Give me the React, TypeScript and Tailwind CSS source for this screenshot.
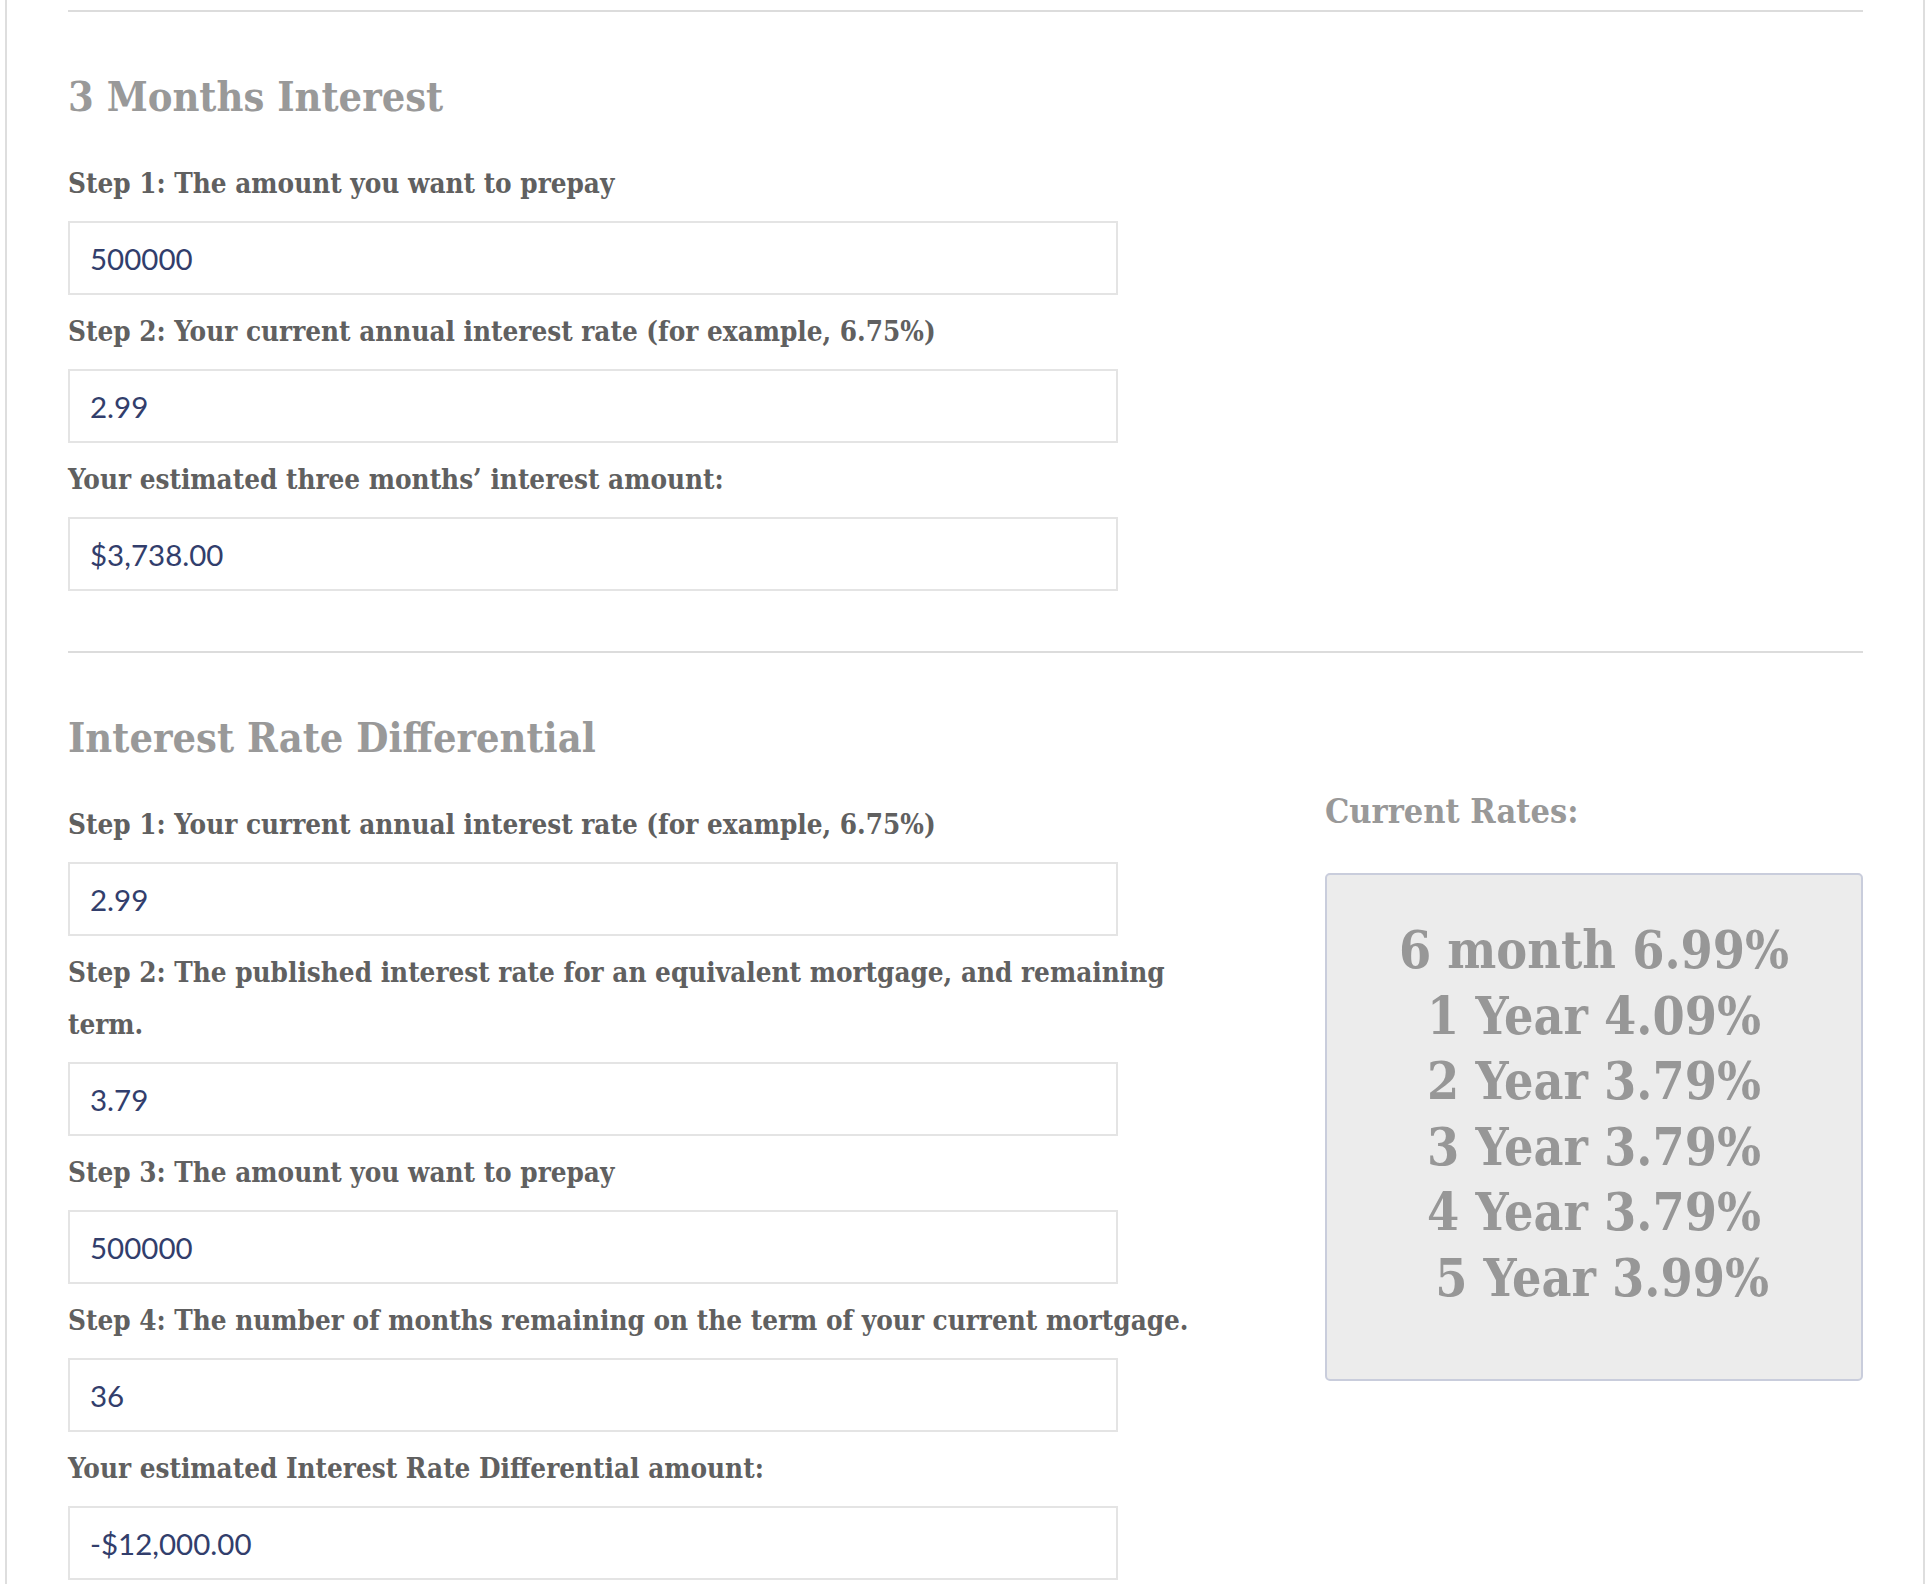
import React from 'react';

const slab = "font-['DejaVu_Serif_Condensed','DejaVu_Serif',serif] font-bold";

type FieldProps = { label: string; value: string };

const Field = ({ label, value }: FieldProps) => (
  <div>
    <label className={`block py-[11px] text-[27.6px] leading-[52px] text-[#606060] ${slab}`}>{label}</label>
    <input
      readOnly
      defaultValue={value}
      className="block h-[74px] w-[1050px] border-2 border-[#e4e4e4] bg-white px-[20px] font-['Lato',sans-serif] text-[29.5px] text-[#323e6c] outline-none"
    />
  </div>
);

const Heading = ({ children }: { children: React.ReactNode }) => (
  <h2 className={`mt-[62px] mb-[27px] text-[41.2px] leading-[46px] text-[#999] ${slab}`}>{children}</h2>
);

const rates = ['6 month 6.99%', '1 Year 4.09%', '2 Year 3.79%', '3 Year 3.79%', '4 Year 3.79%', '\u00a05 Year 3.99%'];

const App = () => {
  return (
    <div className="min-h-[1584px] w-[1930px] overflow-hidden bg-white">
      <div className="ml-[5px] min-h-[1584px] w-[1920px] border-x-2 border-[#dedede] pl-[61px] pr-[60px] pt-[10px]">
        {/* 3 months interest */}
        <hr className="border-t-2 border-[#dcdcdc]" />
        <Heading>3 Months Interest</Heading>
        <Field label="Step 1: The amount you want to prepay" value="500000" />
        <Field label="Step 2: Your current annual interest rate (for example, 6.75%)" value="2.99" />
        <Field label="Your estimated three months’ interest amount:" value="$3,738.00" />

        <hr className="mt-[60px] border-t-2 border-[#dcdcdc]" />

        {/* Interest rate differential */}
        <Heading>Interest Rate Differential</Heading>
        <div className="flex">
          <div className="w-[1160px]">
            <Field label="Step 1: Your current annual interest rate (for example, 6.75%)" value="2.99" />
            <Field label="Step 2: The published interest rate for an equivalent mortgage, and remaining term." value="3.79" />
            <Field label="Step 3: The amount you want to prepay" value="500000" />
            <Field label="Step 4: The number of months remaining on the term of your current mortgage." value="36" />
            <Field label="Your estimated Interest Rate Differential amount:" value="-$12,000.00" />
          </div>
          <div className="ml-auto w-[538px]">
            <h3 className={`mt-[6px] text-[34px] leading-[34px] text-[#999] ${slab}`}>Current Rates:</h3>
            <div className="mt-[45px] h-[508px] rounded-[5px] border-2 border-[#c9cddc] bg-[#ececec] pt-[43px] text-center">
              {rates.map((r) => (
                <div key={r} className={`text-[51.5px] leading-[65.5px] text-[#979797] ${slab}`}>
                  {r}
                </div>
              ))}
            </div>
          </div>
        </div>
      </div>
    </div>
  );
};

export default App;
